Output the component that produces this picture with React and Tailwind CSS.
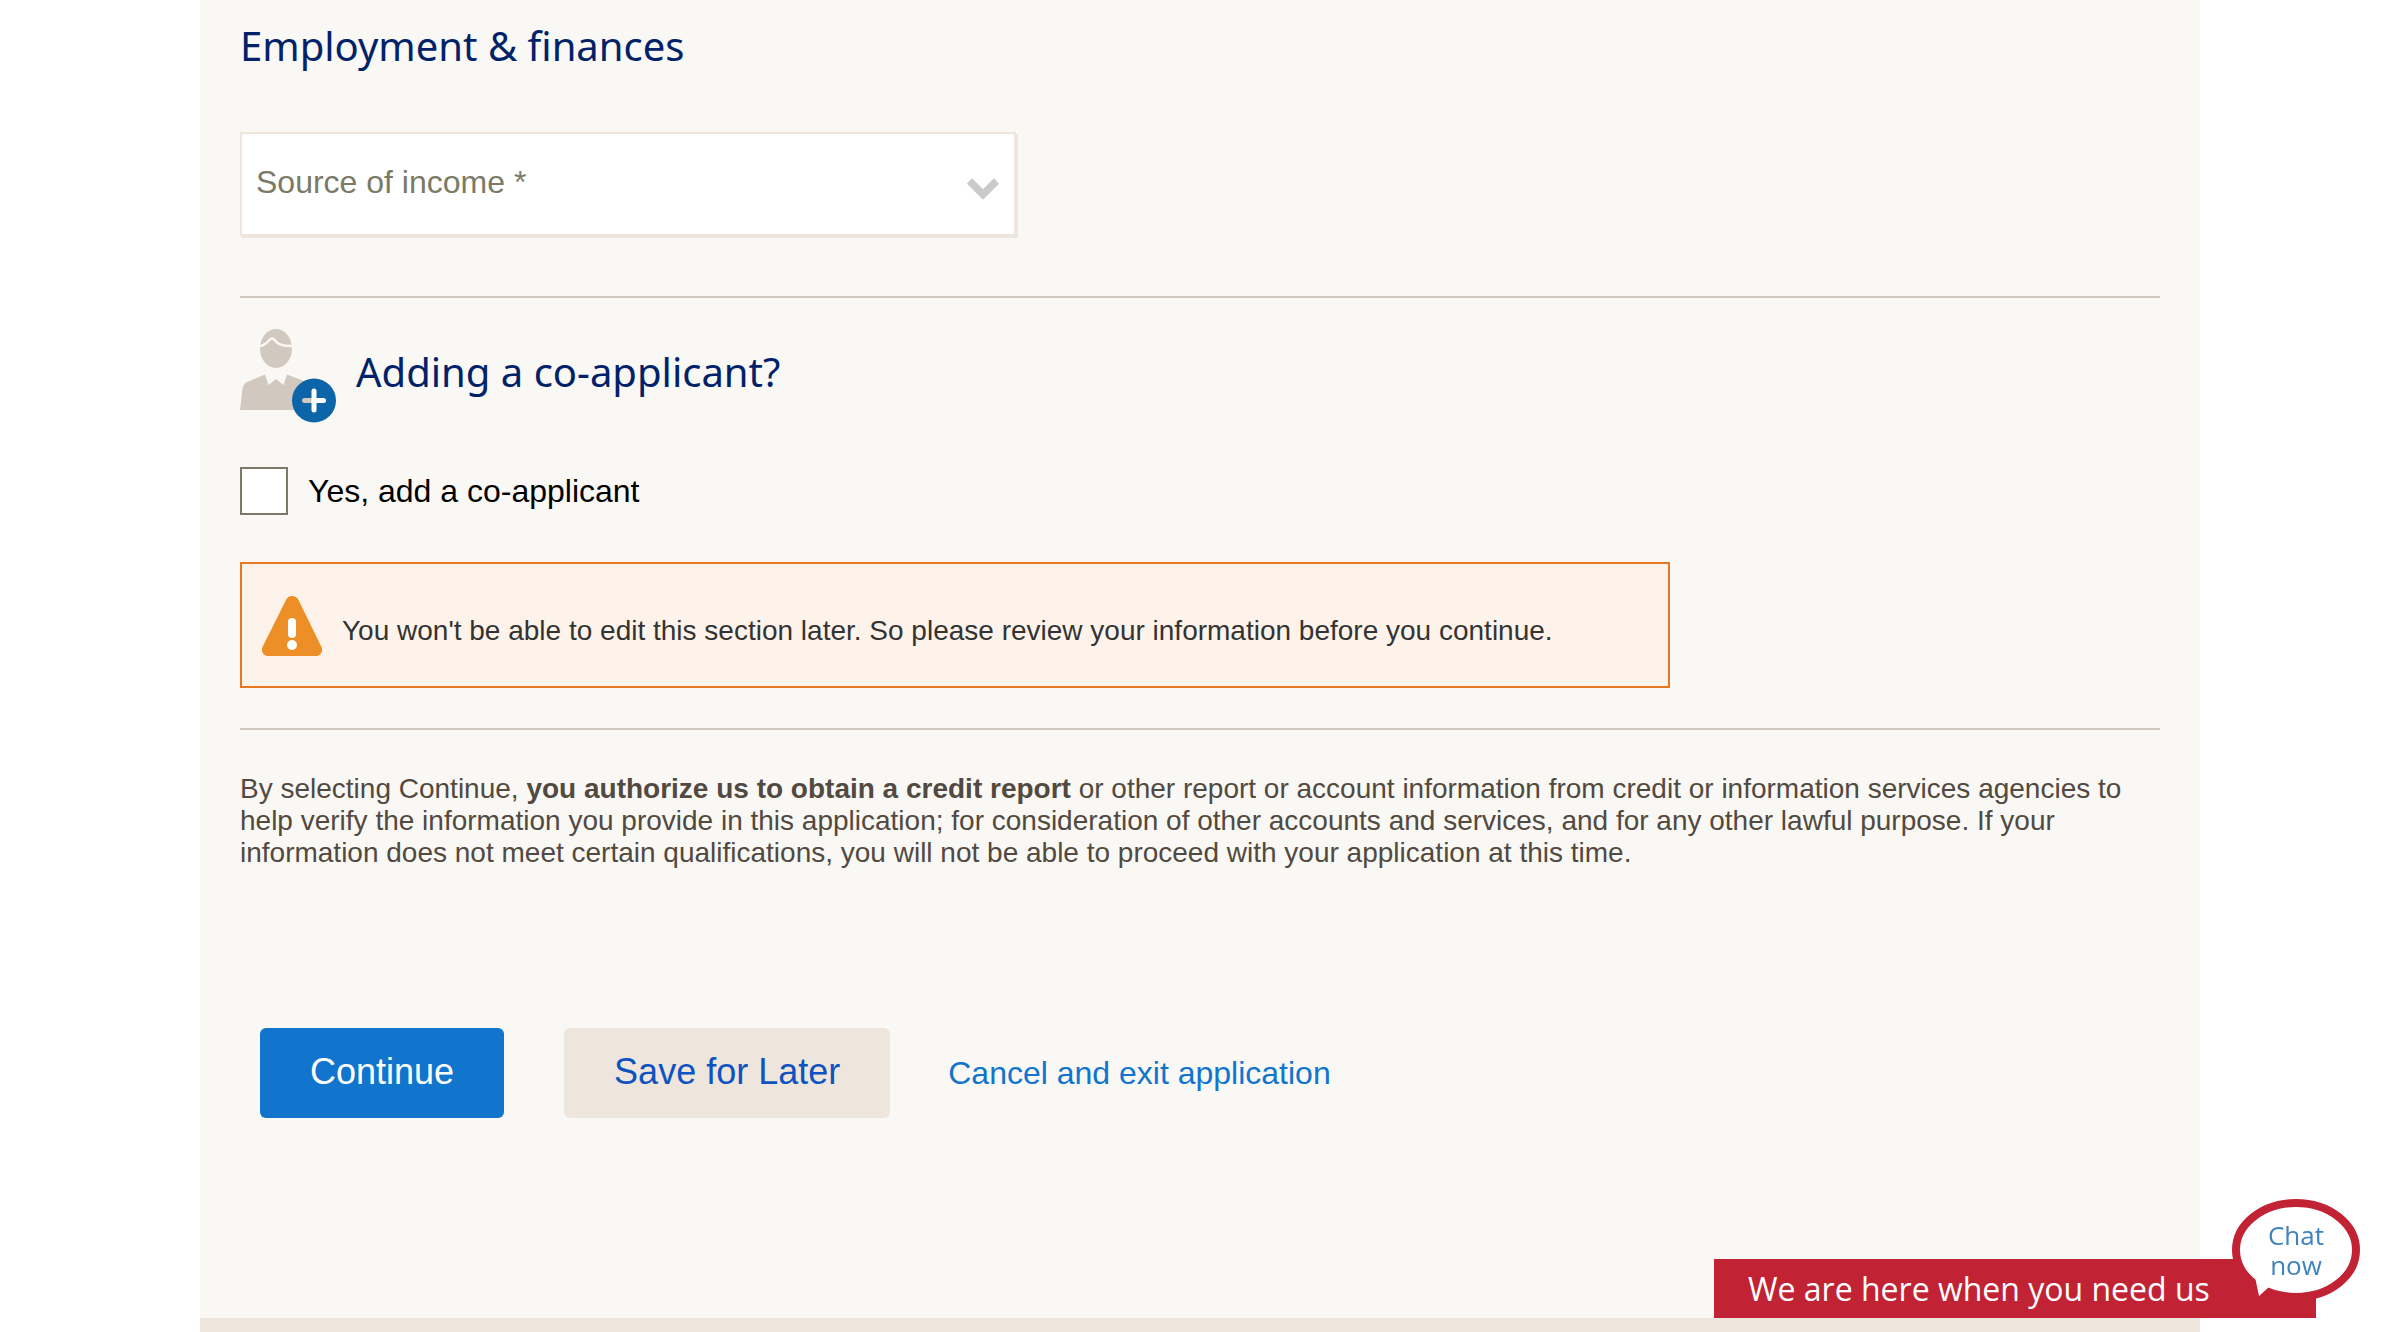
function CoApplicantIcon() {
  return (
    <svg width="96" height="96" viewBox="0 0 96 96" className="shrink-0" aria-hidden="true">
      <ellipse cx="36" cy="20.500" rx="16" ry="19.500" fill="#d1c8bf" />
      <path d="M18 18.500C24 18 27 15 29.500 12C31 10 33 10 34.500 12C38 17 44 18.500 54 18" fill="none" stroke="#f9f8f4" strokeWidth="2.400" />
      <path d="M0 82L2.500 61C3 58 4 55.500 7 54L25 46.500L28.500 57L36 51L43.500 57L47 46.500L64 53L66 82Z" fill="#d1c8bf" />
      <circle cx="74" cy="72.500" r="22" fill="#0c65a8" />
      <path d="M64.500 72.500H71" stroke="#d1c8bf" strokeWidth="5" strokeLinecap="round" />
      <path d="M74 63V82M74 72.500H83.500" stroke="#fff" strokeWidth="5" strokeLinecap="round" />
    </svg>
  );
}

function WarningIcon() {
  return (
    <svg width="60" height="60" viewBox="0 0 60 60" className="shrink-0" aria-hidden="true">
      <path d="M24 4C26 -1.300 34 -1.300 36.500 4L59 50C62 55 58.500 60 53.500 60H6.500C1.500 60 -2 55 1 50Z" fill="#ed8f26" />
      <path d="M30 26V38" stroke="#fff" strokeWidth="8" strokeLinecap="round" />
      <circle cx="30" cy="49" r="5" fill="#fff" />
    </svg>
  );
}

function ChatWidget() {
  return (
    <button
      type="button"
      className="fixed right-10 bottom-3.5 flex cursor-pointer items-end font-['Open_Sans','Noto_Sans',sans-serif]"
    >
      <span className="mr-11 flex h-[59px] w-[602px] items-center bg-[#c12335] pl-[34px] text-[32px] leading-none whitespace-nowrap text-white">
        We are here when you need us
      </span>
      <span className="absolute right-0 bottom-[17px] grid h-[102px] w-32 place-items-center">
        <svg viewBox="0 0 128 102" className="col-start-1 row-start-1 h-full w-full" aria-hidden="true">
          <ellipse cx="64" cy="51" rx="60" ry="47" fill="#fff" stroke="#c12335" strokeWidth="8" />
          <path d="M20 74L23 78L27 97L37 88L50 84L34 68Z" fill="#fff" />
        </svg>
        <span className="col-start-1 row-start-1 text-center text-[26px] leading-[30px] text-[#3e82c0]">
          <span className="block">Chat</span>
          <span className="block">now</span>
        </span>
      </span>
    </button>
  );
}

export default function App() {
  return (
    <div className="min-h-screen bg-white px-[200px] font-['Liberation_Sans',Arial,sans-serif]">
      <main className="flex min-h-screen flex-col border-b-[14px] border-[#eee5dc] bg-[#f9f8f4] px-10">
        <form className="flex flex-col">
          <h2 className="pt-[18px] font-['Noto_Sans',sans-serif] text-[40px] leading-14 text-[#012169]">
            Employment &amp; finances
          </h2>

          <div className="mt-[58px] grid w-[776px] max-w-full items-center">
            <select
              aria-label="Source of income"
              defaultValue=""
              className="col-start-1 row-start-1 h-26 w-full appearance-none rounded-none border-2 border-[#eee6dc] bg-white pr-16 pb-1 pl-3.5 text-[32px] text-[#7a7a66] shadow-[2px_2px_0_#eee6dc]"
            >
              <option value="">Source of income *</option>
              <option value="employed">Employed</option>
              <option value="retired">Retired</option>
            </select>
            <svg width="32" height="22" viewBox="0 0 32 22" className="pointer-events-none col-start-1 row-start-1 mt-2.5 mr-[17px] justify-self-end" aria-hidden="true">
              <path d="M2.500 3L16 16.500L29.500 3" fill="none" stroke="#cbcaca" strokeWidth="7.500" />
            </svg>
          </div>

          <hr className="mt-[60px] border-t-2 border-[#d1c9c0]" />

          <div className="mt-[30px] flex items-start gap-5">
            <CoApplicantIcon />
            <h2 className="pt-4 font-['Noto_Sans',sans-serif] text-[40px] leading-14 text-[#012169]">
              Adding a co-applicant?
            </h2>
          </div>

          <label className="mt-[43px] flex items-center gap-5 text-[32px] leading-12 text-black">
            <input type="checkbox" className="size-12 appearance-none border-2 border-[#7a7a66] bg-white checked:bg-[#0c65a8]" />
            Yes, add a co-applicant
          </label>

          <div role="alert" className="mt-[47px] flex h-[126px] w-[1430px] max-w-full items-center gap-5 border-2 border-[#e87722] bg-[#fef3ea] px-5 pt-0.5">
            <WarningIcon />
            <p className="pt-2.5 text-[28px] leading-8 text-[#333333]">
              You won't be able to edit this section later. So please review your information before you continue.
            </p>
          </div>

          <hr className="mt-10 border-t-2 border-[#d1c9c0]" />

          <p className="mt-[43px] text-[28px] leading-8 text-[#524940]">
            By selecting Continue, <strong>you authorize us to obtain a credit report</strong> or other report or
            account information from credit or information services agencies to help verify the information you
            provide in this application; for consideration of other accounts and services, and for any other lawful
            purpose. If your information does not meet certain qualifications, you will not be able to proceed with
            your application at this time.
          </p>

          <div className="mt-[159px] flex items-center pl-5">
            <button type="button" className="h-[90px] rounded-md bg-[#1174cd] px-[50px] pb-0.5 text-[36px] text-white">
              Continue
            </button>
            <button type="button" className="ml-[60px] h-[90px] rounded-md bg-[#eee6dd] px-[50px] pb-0.5 text-[36px] text-[#0f52c2]">
              Save for Later
            </button>
            <a href="#cancel" className="ml-[58px] text-[32px] text-[#1174cd]">
              Cancel and exit application
            </a>
          </div>
        </form>
      </main>
      <ChatWidget />
    </div>
  );
}
